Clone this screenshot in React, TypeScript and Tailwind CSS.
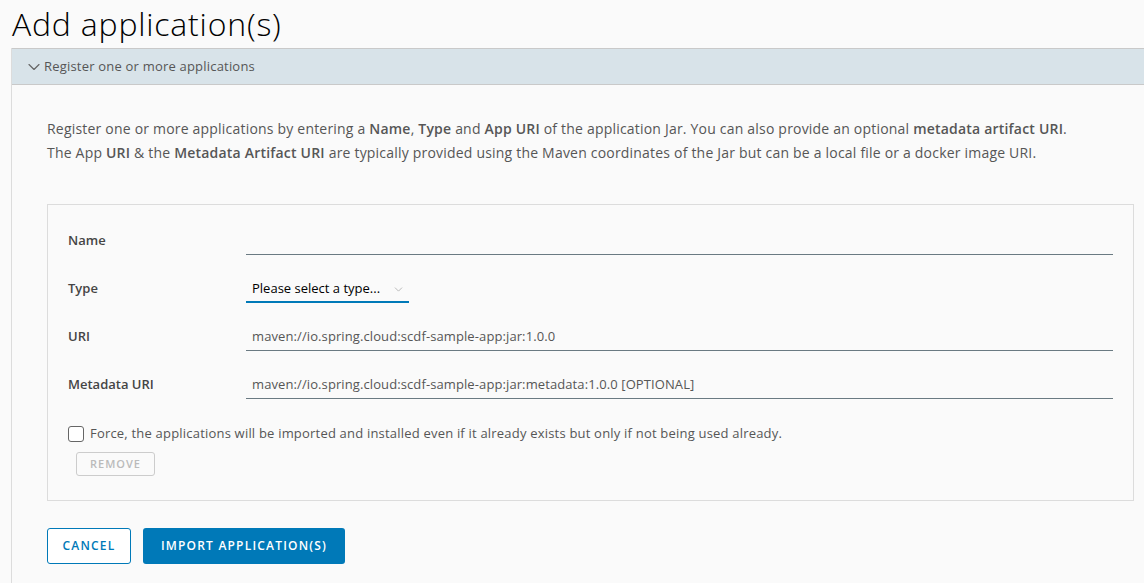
import { ChevronDown } from 'lucide-react'

const font = { fontFamily: '"Open Sans", "Noto Sans", sans-serif' }

function Field({ label, value }: { label: string; value?: string }) {
  return (
    <div className="flex items-center h-12">
      <label className="w-[178px] shrink-0 text-[13px] font-semibold text-[#454545]">{label}</label>
      <div className="flex-1 border-b border-[#6a7a82] h-[28px] flex items-center px-[6px] text-[13px] tracking-[0.1px] text-[#565656]">
        {value}
      </div>
    </div>
  )
}

export default function App() {
  return (
    <div className="min-h-[583px] bg-[#fafafa] text-[#565656]" style={font}>
      <h1 className="text-[32px] font-light text-[#000] leading-[36px] pl-3 pt-[6px] pb-[6px] tracking-[0.8px]">
        Add application(s)
      </h1>
      <div className="ml-[11px] border-l border-[#dcdcdc]">
        <div className="h-[37px] bg-[#d8e3e9] border-y border-[#c9c9c9] flex items-center pl-[12px] text-[13px] tracking-[0.2px] text-[#565656]">
          <ChevronDown className="w-[20px] h-[20px] mr-[0px] text-[#666]" strokeWidth={1.4} />
          Register one or more applications
        </div>
        <div className="pl-[35px] pr-[10px] pt-[32px] pb-[20px]">
          <p className="text-[14px] leading-[24px] tracking-[0.2px] text-[#565656]">
            Register one or more applications by entering a <b className="font-semibold">Name</b>,{' '}
            <b className="font-semibold">Type</b> and <b className="font-semibold">App URI</b> of the application Jar. You
            can also provide an optional <b className="font-semibold">metadata artifact URI</b>.
            <br />
            The App <b className="font-semibold">URI</b> &amp; the <b className="font-semibold">Metadata Artifact URI</b>{' '}
            are typically provided using the Maven coordinates of the Jar but can be a local file or a docker image URI.
          </p>

          <div className="mt-[39px] border border-[#dcdcdc] pl-[20px] pr-[20px] pt-[12px] pb-[24px]">
            <Field label="Name" />
            <div className="flex items-center h-12">
              <label className="w-[178px] shrink-0 text-[13px] font-semibold text-[#454545]">Type</label>
              <div className="border-b-2 border-[#0079b8] h-[26px] mt-[2px] w-[163px] flex items-center pl-[6px] pr-[4px] whitespace-nowrap text-[13px] text-[#000]">
                Please select a type...
                <ChevronDown className="w-[13px] h-[13px] ml-auto text-[#aaa] shrink-0" strokeWidth={1.5} />
              </div>
            </div>
            <Field label="URI" value="maven://io.spring.cloud:scdf-sample-app:jar:1.0.0" />
            <Field label="Metadata URI" value="maven://io.spring.cloud:scdf-sample-app:jar:metadata:1.0.0 [OPTIONAL]" />

            <div className="flex items-center mt-[17px] h-4 text-[13px] tracking-[0.2px] text-[#565656]">
              <span className="w-4 h-4 border border-[#666] rounded-[3px] mr-[6px] bg-white" />
              Force, the applications will be imported and installed even if it already exists but only if not being
              used already.
            </div>
            <button className="block mt-[10px] ml-[8px] h-[24px] w-[79px] border border-[#ccc] rounded-[3px] text-[11px] tracking-[1px] text-[#bbb] font-semibold">
              REMOVE
            </button>
          </div>

          <div className="flex gap-[12px] mt-[27px]">
            <button className="h-[36px] w-[84px] border border-[#0079b8] rounded-[3px] text-[12px] font-semibold tracking-[1.2px] text-[#0079b8] bg-white">
              CANCEL
            </button>
            <button className="h-[36px] w-[202px] rounded-[3px] text-[12px] font-semibold tracking-[1.2px] text-white bg-[#0079b8]">
              IMPORT APPLICATION(S)
            </button>
          </div>
        </div>
      </div>
    </div>
  )
}
